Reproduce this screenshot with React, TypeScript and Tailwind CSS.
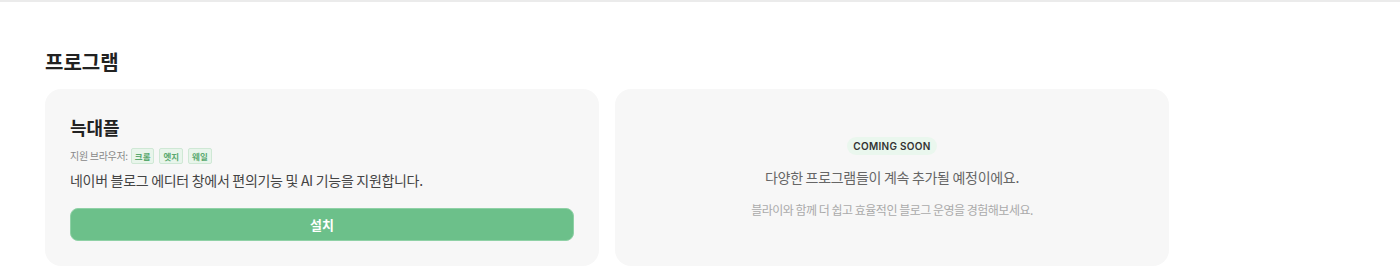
const font = { fontFamily: '"Noto Sans CJK KR", Inter, "Noto Sans", sans-serif' };

const browsers = ['크롬', '엣지', '웨일'];

const ProgramCard = () => (
  <div className="flex flex-col rounded-2xl bg-[#f7f7f7] px-[25px] pt-[24px] pb-[25px]">
    <h3 className="text-[18px] font-bold leading-[28px] text-[#222]">늑대플</h3>
    <div className="mt-[7px] flex items-center gap-[5px] text-[10px] leading-[16px] tracking-[-0.3px] text-[#888]">
      <span className="mr-[-2px]">지원 브라우저:</span>
      {browsers.map((b) => (
        <span
          key={b}
          className="rounded-[2px] border border-[#cfe8d5] bg-[#e8f5eb] px-[3px] text-[8.5px] font-bold leading-[14px] tracking-normal text-[#5aa96f]"
        >
          {b}
        </span>
      ))}
    </div>
    <p className="mt-[5px] text-[14px] leading-[22px] tracking-[-0.3px] text-[#444]">
      네이버 블로그 에디터 창에서 편의기능 및 AI 기능을 지원합니다.
    </p>
    <button className="mt-[17px] h-[33px] w-full rounded-lg border border-[#8fd1a6] bg-[#6cc08a] text-[13px] font-bold text-white">
      설치
    </button>
  </div>
);

const ComingSoonCard = () => (
  <div className="flex flex-col items-center justify-center rounded-2xl bg-[#f7f7f7] px-6">
    <span
      className="rounded-full bg-[#eaf7ee] px-[6px] py-[2px] text-[10px] font-semibold leading-[14px] tracking-[0.3px] text-[#333]"
      style={{ fontFamily: 'Inter, sans-serif' }}
    >
      COMING SOON
    </span>
    <p className="mt-[11px] text-[14px] leading-[22px] tracking-[-0.3px] text-[#666]">
      다양한 프로그램들이 계속 추가될 예정이에요.
    </p>
    <p className="mt-[13px] text-[12px] leading-[18px] tracking-[-0.5px] text-[#aaa]">
      블라이와 함께 더 쉽고 효율적인 블로그 운영을 경험해보세요.
    </p>
  </div>
);

export default function App() {
  return (
    <div className="min-h-[278px] border-t-2 border-[#ebebeb] bg-white" style={font}>
      <div className="px-[45px] pt-[46px]">
        <h2 className="text-[20px] font-bold leading-[28px] text-[#222]">프로그램</h2>
        <div className="mt-[13px] grid w-[1124px] grid-cols-2 gap-[16px]">
          <ProgramCard />
          <ComingSoonCard />
        </div>
      </div>
    </div>
  );
}
